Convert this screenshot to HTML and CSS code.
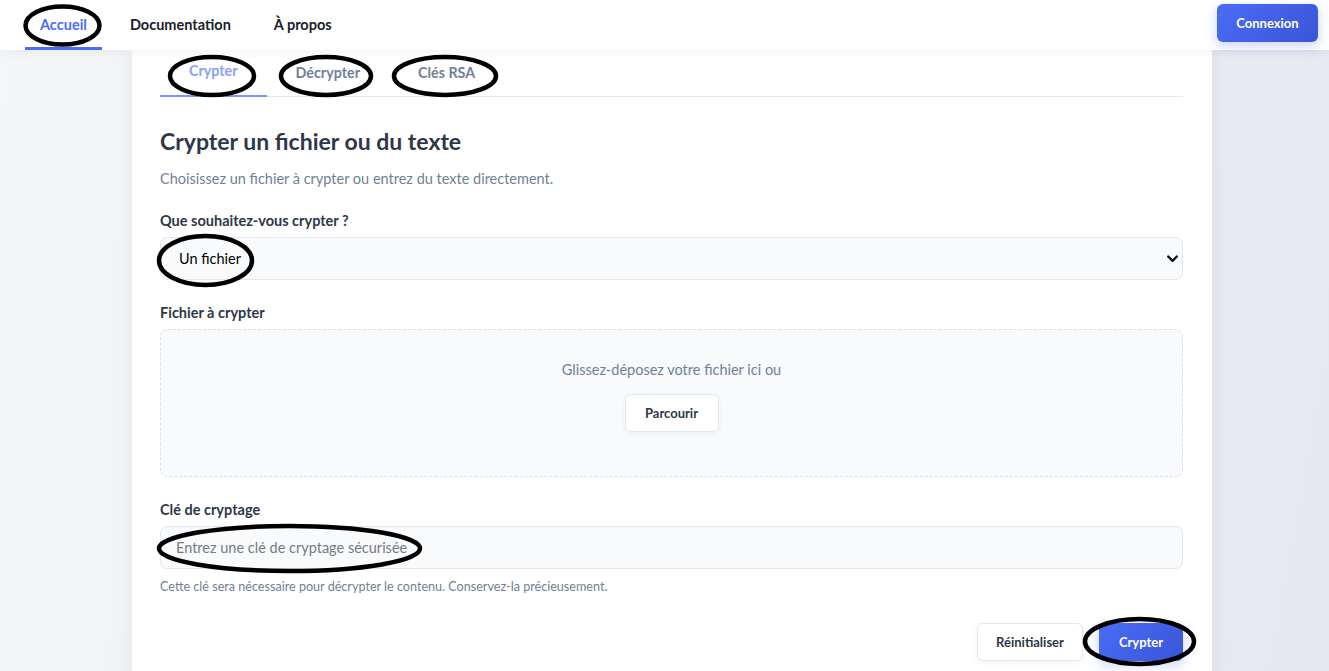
FILE: index.html
```html
<!DOCTYPE html>
<html lang="fr">
<head>
<meta charset="utf-8">
<title>Crypter</title>
<link rel="stylesheet" href="styles.css">
</head>
<body>
<header class="navbar">
  <nav class="nav-links">
    <a class="nav-link active" href="#">Accueil</a>
    <a class="nav-link" href="#">Documentation</a>
    <a class="nav-link" href="#">À propos</a>
  </nav>
  <button class="btn btn-primary btn-login">Connexion</button>
</header>

<main class="main">
  <section class="card">
    <div class="tabs">
      <button class="tab active">Crypter</button>
      <button class="tab">Décrypter</button>
      <button class="tab">Clés RSA</button>
    </div>

    <h1 class="title">Crypter un fichier ou du texte</h1>
    <p class="subtitle">Choisissez un fichier à crypter ou entrez du texte directement.</p>

    <div class="form-group">
      <label class="label">Que souhaitez-vous crypter ?</label>
      <div class="select-wrap">
        <select class="field select">
          <option>Un fichier</option>
          <option>Du texte</option>
        </select>
        <svg class="chevron" width="11" height="8" viewBox="0 0 11 8"><path d="M1.2 1.5 L5.5 5.8 L9.8 1.5" fill="none" stroke="#111" stroke-width="2.4" stroke-linecap="round" stroke-linejoin="round"/></svg>
      </div>
    </div>

    <div class="form-group">
      <label class="label">Fichier à crypter</label>
      <div class="dropzone">
        <p class="drop-text">Glissez-déposez votre fichier ici ou</p>
        <button class="btn btn-light">Parcourir</button>
      </div>
    </div>

    <div class="form-group last">
      <label class="label">Clé de cryptage</label>
      <input class="field input" type="text" placeholder="Entrez une clé de cryptage sécurisée">
      <p class="hint">Cette clé sera nécessaire pour décrypter le contenu. Conservez-la précieusement.</p>
    </div>

    <div class="actions">
      <button class="btn btn-light">Réinitialiser</button>
      <button class="btn btn-primary">Crypter</button>
    </div>
  </section>
</main>

<svg class="annotations" width="1329" height="671" viewBox="0 0 1329 671">
  <g fill="none" stroke="#000" stroke-width="4.5">
    <ellipse cx="62.5" cy="25.5" rx="37" ry="19"/>
    <ellipse cx="212" cy="76" rx="42" ry="19"/>
    <ellipse cx="326" cy="76" rx="45" ry="19"/>
    <ellipse cx="445" cy="76" rx="51" ry="19"/>
    <ellipse cx="205.5" cy="260.5" rx="46.5" ry="24.5"/>
    <ellipse cx="289.5" cy="548.5" rx="130.5" ry="22.5"/>
    <ellipse cx="1139.5" cy="641.5" rx="54.5" ry="22.5"/>
  </g>
</svg>
</body>
</html>
```

FILE: styles.css
```css
* { box-sizing: border-box; }

html, body {
  margin: 0;
  padding: 0;
}

body {
  font-family: "Lato", "Noto Sans", sans-serif;
  color: #2d3748;
  background: linear-gradient(100deg, #f5f6f9 0%, #eef0f4 50%, #e5e8ef 100%);
  min-height: 100vh;
  overflow: hidden;
  position: relative;
}

/* ---------- navbar ---------- */
.navbar {
  position: relative;
  z-index: 2;
  height: 50px;
  background: #fff;
  box-shadow: 0 2px 10px rgba(0, 0, 0, 0.05);
  display: flex;
  align-items: center;
  justify-content: space-between;
  padding: 0 11px 0 25px;
}

.nav-links {
  display: flex;
  height: 100%;
  gap: 13px;
}

.nav-link {
  display: flex;
  align-items: center;
  height: 100%;
  padding: 2px 15px 0;
  font-size: 14.5px;
  font-weight: 700;
  color: #1a202c;
  text-decoration: none;
  border-bottom: 3px solid transparent;
}

.nav-link.active {
  color: #4a6cf7;
  border-bottom-color: #4a6cf7;
}

/* ---------- buttons ---------- */
.btn {
  font-family: inherit;
  font-size: 13px;
  font-weight: 700;
  height: 38px;
  padding: 0 20px;
  border-radius: 6px;
  cursor: pointer;
}

.btn-primary {
  color: #fff;
  border: none;
  background: linear-gradient(135deg, #4a6cf7 0%, #3a55d6 100%);
  box-shadow: 0 4px 12px rgba(74, 108, 247, 0.3);
}

.btn-login {
  width: 101px;
  padding: 0;
  margin-bottom: 4px;
}

.btn-light {
  color: #2d3748;
  background: #fff;
  border: 1px solid #e2e8f0;
  box-shadow: 0 2px 6px rgba(0, 0, 0, 0.05);
}

/* ---------- main card ---------- */
.main {
  display: flex;
  justify-content: center;
  padding-left: 15px;
}

.card {
  width: 1080px;
  min-height: 700px;
  background: #fff;
  box-shadow: 0 0 20px rgba(0, 0, 0, 0.06);
  padding: 0 29px 40px 28px;
}

.tabs {
  display: flex;
  border-bottom: 1px solid #e2e8f0;
}

.tab {
  font-family: inherit;
  font-size: 14.3px;
  font-weight: 700;
  line-height: 19px;
  color: #718096;
  background: none;
  border: none;
  border-bottom: 2px solid transparent;
  margin-bottom: -1px;
  padding: 13px 29px;
  cursor: pointer;
}

.tab.active {
  color: #8aa0f8;
  border-bottom-color: #7c95f8;
  padding-top: 11px;
  padding-bottom: 15px;
}

.title {
  font-size: 23px;
  line-height: 30px;
  font-weight: 700;
  color: #2d3748;
  margin: 29px 0 13px;
}

.subtitle {
  font-size: 14.5px;
  line-height: 20px;
  color: #718096;
  margin: 0 0 22px;
}

.form-group {
  margin-bottom: 23px;
}

.form-group.last {
  margin-bottom: 0;
}

.label {
  display: block;
  font-size: 14.5px;
  line-height: 20px;
  font-weight: 700;
  color: #2d3748;
  margin-bottom: 6px;
}

.field {
  display: block;
  width: 100%;
  height: 43px;
  font-family: inherit;
  font-size: 14.5px;
  background: #f8fafc;
  border: 1px solid #e2e8f0;
  border-radius: 7px;
  outline: none;
}

.select-wrap {
  position: relative;
}

.select {
  appearance: none;
  -webkit-appearance: none;
  color: #000;
  padding: 0 18px;
}

.chevron {
  position: absolute;
  right: 5px;
  top: 18px;
}

.input {
  padding: 0 15px;
  color: #2d3748;
}

.input::placeholder {
  color: #767b84;
}

.dropzone {
  border: 1px dashed #dbe2ec;
  border-radius: 8px;
  background: #f8fafc;
  text-align: center;
  padding: 30px 20px 44px;
}

.drop-text {
  margin: 0 0 14px;
  font-size: 14.5px;
  line-height: 20px;
  color: #718096;
}

.dropzone .btn-light {
  width: 94px;
  padding: 0;
}

.hint {
  font-size: 12.6px;
  line-height: 17px;
  color: #718096;
  margin: 9px 0 0;
}

.actions {
  display: flex;
  justify-content: flex-end;
  gap: 16px;
  margin-top: 28px;
}

.actions .btn-light {
  width: 106px;
  padding: 0;
}

.actions .btn-primary {
  width: 84px;
  padding: 0;
}

/* ---------- hand-drawn annotations ---------- */
.annotations {
  position: absolute;
  top: 0;
  left: 0;
  pointer-events: none;
  z-index: 5;
}
```
